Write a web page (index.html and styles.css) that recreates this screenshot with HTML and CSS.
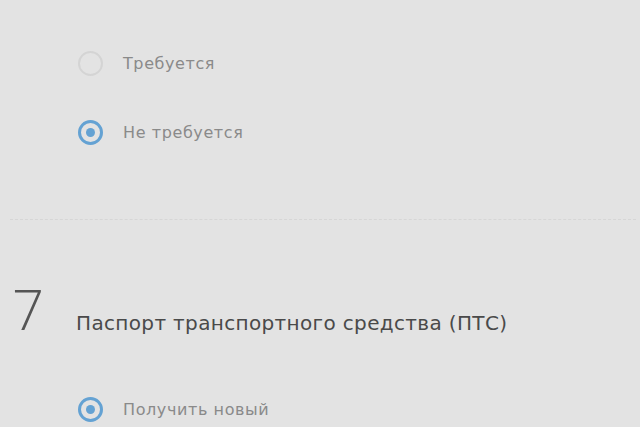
FILE: index.html
```html
<!DOCTYPE html>
<html lang="ru">
<head>
    <meta charset="UTF-8">
    <title>Паспорт транспортного средства</title>
    <link rel="stylesheet" href="styles.css">
</head>
<body>
    <main class="form">
        <section class="step step-tail">
            <div class="options">
                <label class="option">
                    <span class="radio"></span>
                    <span class="option-text">Требуется</span>
                </label>
                <label class="option">
                    <span class="radio checked"></span>
                    <span class="option-text">Не требуется</span>
                </label>
            </div>
        </section>

        <section class="step">
            <div class="step-head">
                <span class="step-num">7</span>
                <h2 class="step-title">Паспорт транспортного средства (ПТС)</h2>
            </div>
            <div class="options">
                <label class="option">
                    <span class="radio checked"></span>
                    <span class="option-text">Получить новый</span>
                </label>
            </div>
        </section>
    </main>
</body>
</html>
```

FILE: styles.css
```css
* {
    margin: 0;
    padding: 0;
    box-sizing: border-box;
}

body {
    background-color: #e3e3e3;
    font-family: 'DejaVu Sans', sans-serif;
    color: #777;
    overflow: hidden;
}

.form {
    padding-left: 10px;
    padding-right: 4px;
}

.step {
    border-bottom: 1px dashed #d6d6d6;
}

.step:last-child {
    border-bottom: none;
}

.step-tail {
    padding-top: 50px;
    padding-bottom: 74px;
}

.options {
    display: flex;
    flex-direction: column;
    gap: 43px;
    padding-left: 68px;
}

.option {
    display: flex;
    align-items: center;
    gap: 20px;
    height: 26px;
}

.radio {
    width: 25px;
    height: 25px;
    border-radius: 50%;
    border: 2px solid #d4d4d4;
    display: flex;
    align-items: center;
    justify-content: center;
}

.radio.checked {
    border: 3px solid #64a2d3;
}

.radio.checked::after {
    content: "";
    width: 9px;
    height: 9px;
    border-radius: 50%;
    background-color: #64a2d3;
}

.option-text {
    font-size: 16px;
    letter-spacing: 0.6px;
    color: #8a8a8a;
}

.step-head {
    display: flex;
    align-items: flex-end;
    gap: 32px;
    padding-top: 64px;
    padding-left: 2px;
    margin-bottom: 64px;
}

.step-num {
    font-family: 'Open Sans', sans-serif;
    font-size: 56px;
    font-weight: 300;
    line-height: 48px;
    color: #555;
    width: 32px;
}

.step-title {
    font-size: 20px;
    font-weight: 400;
    color: #4a4a4a;
    line-height: 18px;
    letter-spacing: 0.35px;
}
```
